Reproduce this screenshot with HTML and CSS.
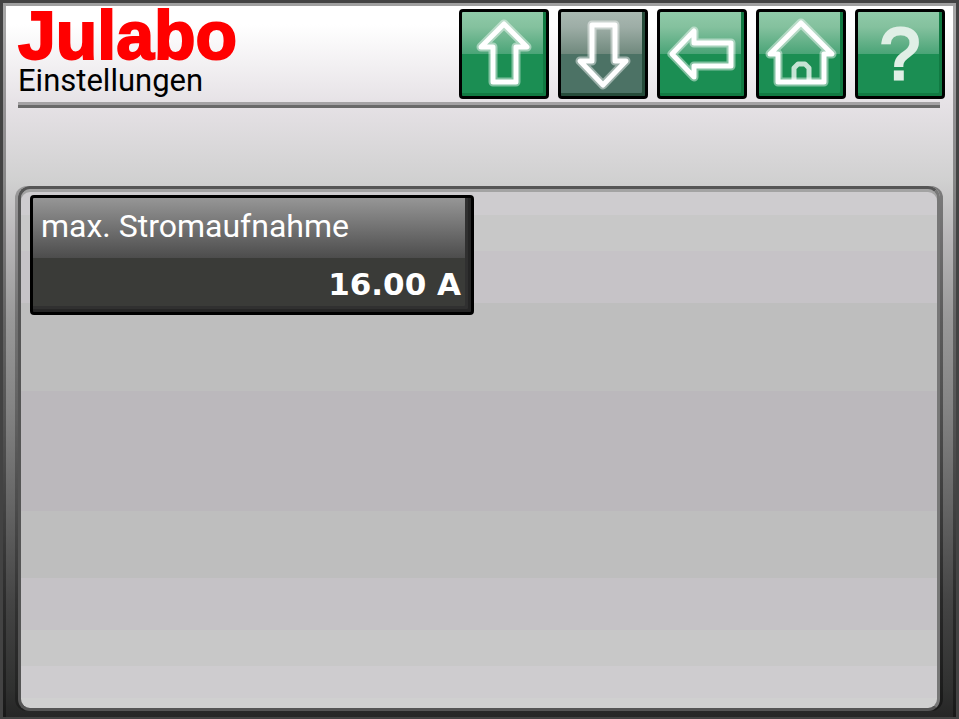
FILE: index.html
```html
<!DOCTYPE html>
<html lang="de">
<head>
    <meta charset="UTF-8">
    <meta name="viewport" content="width=device-width, initial-scale=1.0">
    <title>Julabo - Einstellungen</title>
    <link rel="stylesheet" href="styles.css">
</head>
<body>
    <div class="screen">
        <header class="header">
            <div class="brand">
                <div class="logo">Julabo</div>
                <h1 class="title">Einstellungen</h1>
            </div>
            <nav class="toolbar">
                <button type="button" class="tool" aria-label="Nach oben">
                    <svg viewBox="0 0 84 84" aria-hidden="true">
                        <path class="halo" d="M42 12L65 35H54V70H31V35H19Z"/>
                        <path class="line" d="M42 12L65 35H54V70H31V35H19Z"/>
                    </svg>
                </button>
                <button type="button" class="tool tool-off" aria-label="Nach unten">
                    <svg viewBox="0 0 84 84" aria-hidden="true">
                        <path class="halo" d="M31 13H54V49H65L42 73L19 49H31Z"/>
                        <path class="line" d="M31 13H54V49H65L42 73L19 49H31Z"/>
                    </svg>
                </button>
                <button type="button" class="tool" aria-label="Zurück">
                    <svg viewBox="0 0 84 84" aria-hidden="true">
                        <path class="halo" d="M12 42L34 19V31H71V54H34V65Z"/>
                        <path class="line" d="M12 42L34 19V31H71V54H34V65Z"/>
                    </svg>
                </button>
                <button type="button" class="tool" aria-label="Startseite">
                    <svg viewBox="0 0 84 84" aria-hidden="true">
                        <path class="halo" d="M42 11L73 42H65V70H19V42H11Z"/>
                        <path class="line" d="M42 11L73 42H65V70H19V42H11Z"/>
                        <path class="door" d="M35 70V56L39 52H46L50 56V70"/>
                    </svg>
                </button>
                <button type="button" class="tool tool-help" aria-label="Hilfe">?</button>
            </nav>
        </header>
        <main class="panel">
            <button type="button" class="entry">
                <span class="entry-name">max. Stromaufnahme</span>
                <span class="entry-value">16.00 A</span>
            </button>
        </main>
    </div>
</body>
</html>
```
FILE: styles.css
```css
* {
    box-sizing: border-box;
}

body {
    margin: 0;
    font-family: Roboto, "Liberation Sans", sans-serif;
    background: #434343;
}

.screen {
    display: flex;
    flex-direction: column;
    min-height: 100vh;
    padding: 3px 16px 6px 15px;
    border: 3px solid #434343;
    border-bottom-width: 2px;
    background: linear-gradient(#fff 3%, #e6e2e6 14%, #d0d0d0 25%, #b8b6b8 33%, #999 44%, #858585 56%, #666 70%, #444 84%, #303130 96%, #262626);
    box-shadow: inset 0 3px #a0a0a0, inset 3px 0 rgba(0, 0, 0, 0.35), inset -3px 0 rgba(0, 0, 0, 0.35);
}

.header {
    display: flex;
    justify-content: space-between;
    height: 102px;
    padding-top: 3px;
    border-bottom: 3px solid #696969;
    box-shadow: inset 0 -3px #a4a2a4;
}

.logo {
    color: #f00;
    font: bold 68px/52px "Liberation Sans", Arial, sans-serif;
    -webkit-text-stroke: 2px #f00;
}

.title {
    margin: 0;
    color: #000;
    font-size: 31px;
    font-weight: normal;
    line-height: 40px;
}

.toolbar {
    display: flex;
    gap: 9px;
    margin-right: -5px;
}

.tool {
    width: 90px;
    height: 90px;
    padding: 0;
    border: 3px solid #000;
    border-radius: 4px;
    background: linear-gradient(#8fcaa8, #84c19e 18%, #4aa477 50%, #1b8e53 50%);
    box-shadow: inset -3px -3px #117a42;
}

.tool-off {
    background: linear-gradient(#a9b8b1, #9dada6 18%, #70897d 50%, #4c7265 50%);
    box-shadow: inset -3px -3px #264c3a;
}

.tool-help {
    color: #e0efe6;
    font: 72px/84px "Liberation Sans", Arial, sans-serif;
    -webkit-text-stroke: 3px #e0efe6;
}

.tool svg {
    display: block;
    width: 84px;
    height: 84px;
    fill: none;
    stroke: #fff;
    stroke-linejoin: round;
}

.halo {
    stroke-width: 9px;
    opacity: 0.45;
}

.line {
    stroke-width: 5px;
}

.door {
    stroke-width: 5px;
    opacity: 0.75;
}

.panel {
    flex: 1;
    margin-top: 78px;
    padding: 6px 9px;
    border: 3px solid #555;
    border-right-color: #777;
    border-radius: 12px;
    background: linear-gradient(
        #cecccf 5%,
        #c8c8c8 5% 12%,
        #c6c3c7 12% 22%,
        #bebebe 22% 39%,
        #bbb8bc 39% 62%,
        #bebebe 62% 75%,
        #c5c2c6 75% 85%,
        #c8c8c8 85% 92%,
        #cecccf 92% 98%,
        #d0d0d0 98%);
    box-shadow: inset 0 3px #a3a3a3, -3px 0 rgba(0, 0, 0, 0.25), 3px 0 rgba(0, 0, 0, 0.4);
}

.entry {
    display: flex;
    flex-direction: column;
    width: 444px;
    max-width: 100%;
    height: 120px;
    padding: 0 10px 0 8px;
    border: 3px solid #000;
    border-radius: 4px;
    color: #fff;
    text-align: left;
    background: linear-gradient(#969696, #4c4c4c 53%, #3a3b38 53%);
    box-shadow: inset -3px -3px #252525, inset -6px -6px #303030;
}

.entry-name {
    font: 32px/56px Roboto, "Liberation Sans", sans-serif;
}

.entry-value {
    align-self: flex-end;
    font: bold 31px/60px "DejaVu Sans", sans-serif;
}
```
